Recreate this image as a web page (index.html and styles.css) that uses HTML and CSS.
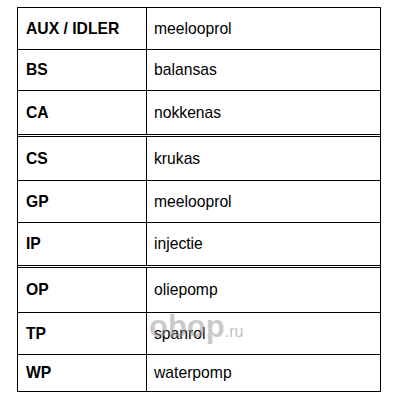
FILE: index.html
```html
<!DOCTYPE html>
<html>
<head>
<meta charset="utf-8">
<link rel="stylesheet" href="styles.css">
</head>
<body>
<div class="sheet">
  <div class="row h42"><div class="code">AUX / IDLER</div><div class="name">meelooprol</div></div>
  <div class="row h41"><div class="code">BS</div><div class="name">balansas</div></div>
  <div class="row h46 end"><div class="code">CA</div><div class="name">nokkenas</div></div>
  <div class="row h44"><div class="code">CS</div><div class="name">krukas</div></div>
  <div class="row h42"><div class="code">GP</div><div class="name">meelooprol</div></div>
  <div class="row h45 end"><div class="code">IP</div><div class="name">injectie</div></div>
  <div class="row h45"><div class="code">OP</div><div class="name">oliepomp</div></div>
  <div class="row h42"><div class="code">TP</div><div class="name">spanrol</div></div>
  <div class="row h37"><div class="code">WP</div><div class="name">waterpomp</div></div>
</div>
<div class="watermark"><span class="wm-big">obop</span><span class="wm-small">.ru</span></div>
</body>
</html>
```
FILE: styles.css
```css
html, body {
  margin: 0;
  padding: 0;
  background: #fff;
}
body {
  position: relative;
  width: 400px;
  height: 400px;
  font-family: "Liberation Sans", Arial, sans-serif;
  color: #000;
}
.sheet {
  box-sizing: border-box;
  width: 364px;
  margin: 7px 0 0 17px;
  border: 1px solid #000;
  border-bottom: 0;
}
.row {
  box-sizing: border-box;
  display: grid;
  grid-template-columns: 129px 1fr;
  border-bottom: 1px solid #000;
}
.row.end {
  border-bottom: 3px double #000;
}
.h37 { height: 37px; }
.h41 { height: 41px; }
.h42 { height: 42px; }
.h44 { height: 44px; }
.h45 { height: 45px; }
.h46 { height: 46px; }
.code, .name {
  display: flex;
  align-items: center;
  font-size: 15.7px;
}
.code {
  box-sizing: border-box;
  border-right: 1px solid #000;
  padding-left: 8px;
  font-weight: bold;
}
.name {
  padding-left: 7px;
}
.watermark {
  position: absolute;
  left: 149px;
  top: 309px;
  color: rgba(150, 150, 150, 0.5);
  font-family: "Liberation Sans", Arial, sans-serif;
  font-weight: bold;
  white-space: nowrap;
  pointer-events: none;
}
.wm-big {
  font-size: 31px;
}
.wm-small {
  font-size: 16px;
  font-weight: normal;
  color: rgba(150, 150, 150, 0.6);
}
```
